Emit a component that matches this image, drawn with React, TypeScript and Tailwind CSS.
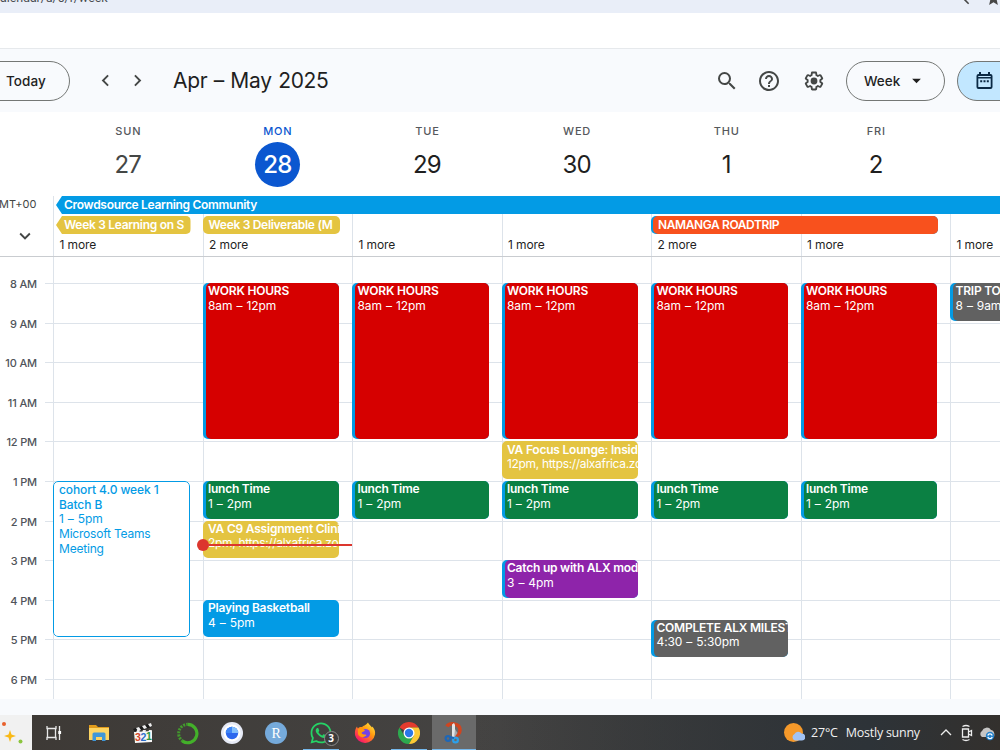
import React from "react";
import {
  MdArrowDropDown,
  MdChevronLeft,
  MdChevronRight,
  MdExpandMore,
  MdHelpOutline,
  MdSearch,
  MdStar,
} from "react-icons/md";
import { FaWhatsapp } from "react-icons/fa";

type CalendarEvent = {
  day: number;
  start: number;
  end: number;
  title: string;
  time: string;
  place?: string;
  color: string;
  edge?: boolean;
  outlined?: boolean;
};

const days = [
  { name: "SUN", date: "27" },
  { name: "MON", date: "28" },
  { name: "TUE", date: "29" },
  { name: "WED", date: "30" },
  { name: "THU", date: "1" },
  { name: "FRI", date: "2" },
];

const hours = ["8 AM", "9 AM", "10 AM", "11 AM", "12 PM", "1 PM", "2 PM", "3 PM", "4 PM", "5 PM", "6 PM"];

const weekdays = [1, 2, 3, 4, 5];

const events: CalendarEvent[] = [
  ...weekdays.map((day) => ({
    day,
    start: 8,
    end: 12,
    title: "WORK HOURS",
    time: "8am – 12pm",
    color: "bg-[#d60000]",
    edge: true,
  })),
  ...weekdays.map((day) => ({
    day,
    start: 13,
    end: 14,
    title: "lunch Time",
    time: "1 – 2pm",
    color: "bg-[#0b8043]",
    edge: true,
  })),
  { day: 0, start: 13, end: 17, title: "cohort 4.0 week 1 Batch B", time: "1 – 5pm", place: "Microsoft Teams Meeting", color: "bg-white", outlined: true },
  { day: 1, start: 14, end: 15, title: "VA C9 Assignment Clini", time: "2pm, https://alxafrica.zo", color: "bg-[#e4c441]" },
  { day: 1, start: 16, end: 17, title: "Playing Basketball", time: "4 – 5pm", color: "bg-[#039be5]" },
  { day: 3, start: 12, end: 13, title: "VA Focus Lounge: Insid", time: "12pm, https://alxafrica.zo", color: "bg-[#e4c441]" },
  { day: 3, start: 15, end: 16, title: "Catch up with ALX mod", time: "3 – 4pm", color: "bg-[#8e24aa]", edge: true },
  { day: 4, start: 16.5, end: 17.5, title: "COMPLETE ALX MILEST", time: "4:30 – 5:30pm", color: "bg-[#616161]", edge: true },
  { day: 6, start: 8, end: 9, title: "TRIP TO", time: "8 – 9am", color: "bg-[#616161]", edge: true },
];

// the grid starts with a partial 7 AM row, then one row per half hour
const rowOf = (hour: number) => (hour - 8) * 2 + 2;

const SettingsIcon = () => (
  <svg width="22" height="22" viewBox="0 0 24 24" fill="#444746">
    <path d="M13.85 22.25h-3.7c-.74 0-1.36-.54-1.45-1.27l-.27-1.89c-.27-.14-.53-.29-.79-.46l-1.8.72c-.7.26-1.47-.03-1.81-.65L2.2 15.53c-.35-.66-.2-1.44.36-1.88l1.53-1.19c-.01-.15-.02-.3-.02-.46 0-.15.01-.31.02-.46l-1.52-1.19c-.59-.45-.74-1.26-.37-1.88l1.85-3.19c.34-.62 1.11-.9 1.79-.63l1.81.73c.26-.17.52-.32.78-.46l.27-1.91c.09-.7.71-1.25 1.44-1.25h3.7c.74 0 1.36.54 1.45 1.27l.27 1.89c.27.14.53.29.79.46l1.8-.72c.71-.26 1.48.03 1.82.65l1.84 3.18c.36.66.2 1.44-.36 1.88l-1.52 1.19c.01.15.02.3.02.46s-.01.31-.02.46l1.52 1.19c.56.45.72 1.23.37 1.86l-1.86 3.22c-.34.62-1.11.9-1.8.63l-1.8-.72c-.26.17-.52.32-.78.46l-.27 1.91c-.1.68-.72 1.22-1.46 1.22zm-3.23-2h2.76l.37-2.55.53-.22c.44-.18.88-.44 1.34-.78l.45-.34 2.38.96 1.38-2.4-2.03-1.58.07-.56c.03-.26.06-.51.06-.78s-.03-.53-.06-.78l-.07-.56 2.03-1.58-1.39-2.4-2.39.96-.45-.35c-.42-.32-.87-.58-1.33-.77l-.52-.22-.37-2.55h-2.76l-.37 2.55-.53.21c-.44.19-.88.44-1.34.79l-.45.33-2.38-.95-1.39 2.39 2.03 1.58-.07.56a7 7 0 0 0-.06.79c0 .26.02.53.06.78l.07.56-2.03 1.58 1.38 2.4 2.39-.96.45.35c.43.33.86.58 1.33.77l.53.22.38 2.55z" />
    <circle cx="12" cy="12" r="3.7" />
  </svg>
);

const CalendarIcon = () => (
  <svg width="17" height="19" viewBox="0 0 17 19" fill="#0b2a45">
    <path
      fillRule="evenodd"
      d="M3 1h2v2h7V1h2v2h.5A2 2 0 0 1 16.500 5v11a2 2 0 0 1-2 2h-12a2 2 0 0 1-2-2V5a2 2 0 0 1 2-2H3zM2.300 7.500V16h12.400V7.500zM2.300 5v1h12.400V5z"
    />
    <path d="M4.200 9.300h2v2h-2zM7.500 9.300h2v2h-2zM10.800 9.300h2v2h-2z" />
  </svg>
);

const TopBar = () => (
  <>
    <div className="flex h-[13px] shrink-0 items-end justify-between overflow-hidden bg-[#e9eef8]">
      <span className="h-[23px] font-[Roboto,sans-serif] text-[12.500px] leading-4 tracking-[-0.1px] text-[#4a4d52]">
        alendar/u/0/r/week
      </span>
      <div className="-mr-[2px] flex h-[23px] items-start gap-[9px] text-[#474747]">
        <MdChevronLeft size={19} />
        <MdStar size={17} />
      </div>
    </div>
    <div className="h-9 shrink-0 border-b border-[#e6e9ec] bg-white" />
  </>
);

const Header = () => (
  <header className="flex h-[63px] shrink-0 items-center bg-[#f8fafd] text-[#1f1f1f]">
    <button className="-ml-5 flex h-10 w-[90px] shrink-0 items-center rounded-full border border-[#747775] pt-[2px] pl-[25px] text-[13.5px] font-medium tracking-[0.1px]">
      Today
    </button>
    <div className="ml-[24px] flex shrink-0 gap-[9px] text-[#444746]">
      <MdChevronLeft size={23} />
      <MdChevronRight size={23} />
    </div>
    <h1 className="ml-[24px] w-[543px] shrink-0 pt-px text-[21px] tracking-[-0.3px] [word-spacing:0.8px]">Apr – May 2025</h1>
    <div className="flex shrink-0 items-center gap-[22px] text-[#444746]">
      <MdSearch size={24} className="-ml-px" />
      <MdHelpOutline size={24} className="-ml-[4px]" />
      <SettingsIcon />
    </div>
    <button className="ml-[21px] flex h-10 w-[99px] shrink-0 items-center gap-[6px] rounded-full border border-[#747775] pl-[17px] text-[13.500px] font-medium">
      <span className="pt-[2px]">Week</span>
      <MdArrowDropDown size={21} />
    </button>
    <button className="ml-3 flex h-10 w-[90px] shrink-0 items-center rounded-full border border-[#747775] bg-[#c2e7ff] pl-[18px]">
      <CalendarIcon />
    </button>
  </header>
);

const DayNames = () => (
  <div className="ml-[53px] grid h-[84px] shrink-0 grid-cols-[repeat(7,149.6px)]">
    {days.map((day) => {
      const today = day.name === "MON";
      return (
        <div key={day.name} className="flex flex-col items-center pt-[11px]">
          <span className={`pl-px text-[11px] leading-4 font-medium tracking-[0.8px] ${today ? "text-[#0b57d0]" : "text-[#55585c]"}`}>
            {day.name}
          </span>
          <span
            className={`mt-[3px] flex size-[45px] items-center justify-center rounded-full pt-px text-[24px] tracking-[-0.8px] ${
              today ? "bg-[#0b57d0] font-medium text-white" : day.name === "SUN" ? "text-[#444746]" : "text-[#1f1f1f]"
            }`}
          >
            {day.date}
          </span>
        </div>
      );
    })}
  </div>
);

const allDayText = "overflow-hidden whitespace-nowrap text-[12px] leading-[18px] font-semibold text-white";
const arrowLeft = "[clip-path:polygon(6px_0,100%_0,100%_100%,6px_100%,0_50%)]";

const AllDay = () => (
  <div className="flex h-[61px] shrink-0 border-b border-[#c9ccd0]">
    <div className="flex w-[53px] shrink-0 flex-col text-[#444746]">
      <span className="-ml-[1px] text-[11px] leading-4">MT+00</span>
      <MdExpandMore size={22} className="mt-[13px] ml-[14px]" />
    </div>
    <div className="grid shrink-0 grid-cols-[repeat(7,149.5px)] grid-rows-[18px_18px_1fr] gap-y-[2px]">
      {[0, 1, 2, 3, 4, 5, 6].map((col) => (
        <div key={col} className="row-span-full row-start-1 border-l border-[#dde3ea]" style={{ gridColumn: col + 1 }} />
      ))}
      <div className={`col-span-full row-start-1 ml-[3px] bg-[#039be5] pl-[8px] tracking-[-0.3px] ${allDayText} ${arrowLeft}`}>
        Crowdsource Learning Community
      </div>
      <div className={`col-start-1 row-start-2 mr-[12px] ml-[3px] rounded-r-[5px] bg-[#e4c441] pl-[8px] tracking-[-0.3px] ${allDayText} ${arrowLeft}`}>
        Week 3 Learning on S
      </div>
      <div className={`col-start-2 row-start-2 mr-[12px] rounded-[5px] bg-[#e4c441] pl-[6px] tracking-[-0.3px] ${allDayText}`}>
        Week 3 Deliverable (M
      </div>
      <div className="col-span-2 col-start-5 row-start-2 mr-[12px] flex overflow-hidden rounded-[5px] bg-[#039be5] pl-[2px]">
        <div className={`flex-1 rounded-l-[5px] bg-[#f8511d] pl-[5px] tracking-[-0.4px] ${allDayText}`}>NAMANGA ROADTRIP</div>
      </div>
      {[1, 2, 1, 1, 2, 1, 1].map((count, col) => (
        <span
          key={col}
          className="row-start-3 pl-[6.500px] text-[12px] leading-[17px] tracking-[-0.1px] text-[#1f1f1f]"
          style={{ gridColumn: col + 1 }}
        >
          {count} more
        </span>
      ))}
    </div>
  </div>
);

const EventCard = ({ event }: { event: CalendarEvent }) => (
  <div
    className={`mr-[13px] mb-[2px] flex overflow-hidden rounded-[5px] text-[12px] leading-[14.7px] ${
      event.edge ? "bg-[#039be5] pl-[3px]" : ""
    }`}
    style={{ gridColumn: event.day + 1, gridRow: `${rowOf(event.start)} / ${rowOf(event.end)}` }}
  >
    <div
      className={`min-w-0 flex-1 overflow-hidden ${event.color} ${
        event.outlined
          ? "rounded-[5px] border border-[#039be5] pt-px pl-[5px] text-[#039be5]"
          : event.edge
            ? "rounded-l-[5px] pt-[1.2px] pl-[2.500px] whitespace-nowrap text-white"
            : "pt-[1.2px] pl-[5.500px] whitespace-nowrap text-white"
      }`}
    >
      <p className={event.outlined ? "w-[110px] font-medium tracking-[-0.1px]" : "font-semibold tracking-[-0.22px]"}>{event.title}</p>
      <p className={event.time.includes("https") ? "tracking-[-0.32px]" : "[word-spacing:0.8px] tracking-[-0.1px]"}>{event.time}</p>
      {event.place && <p className="w-[110px] tracking-[-0.2px]">{event.place}</p>}
    </div>
  </div>
);

const WeekGrid = () => (
  <div className="flex h-[442px] shrink-0 overflow-hidden">
    <div className="flex w-[45px] shrink-0 flex-col pt-[7px] pr-[8px] text-right text-[11px] font-medium tracking-[-0.15px] text-[#50545a]">
      {hours.map((hour) => (
        <span key={hour} className="h-[39.6px] shrink-0 leading-[40px]">
          {hour}
        </span>
      ))}
    </div>
    <div className="grid shrink-0 grid-cols-[8px_repeat(7,149.5px)] grid-rows-[26px_repeat(21,19.8px)]">
      {hours.map((hour, i) => (
        <div key={hour} className="col-span-full border-t border-[#dde3ea]" style={{ gridRow: `${i * 2 + 2} / span 2` }} />
      ))}
      <div className="col-start-2 col-end-9 row-span-full row-start-1 grid grid-cols-subgrid grid-rows-subgrid">
        {[0, 1, 2, 3, 4, 5, 6].map((col) => (
          <div key={col} className="row-span-full row-start-1 border-l border-[#dde3ea]" style={{ gridColumn: col + 1 }} />
        ))}
        {events.map((event, i) => (
          <EventCard key={i} event={event} />
        ))}
        {/* current time marker */}
        <div className="z-10 col-start-2 row-start-[15] mt-[-1px] -ml-[6px] flex h-3 items-center">
          <span className="size-3 rounded-full bg-[#dc362e]" />
          <span className="h-[2px] flex-1 bg-[#dc362e]" />
        </div>
      </div>
    </div>
  </div>
);

const taskIcons = [
  <svg key="tasks" width="18" height="18" viewBox="0 0 18 18" fill="none" stroke="#e8e8e8" strokeWidth="1.300">
    <path d="M2 2v2.500h9V2M2 16v-2.500h9V16M2.500 4.500h8v9h-8zM14.500 2v14" />
    <path d="M13.300 7h2.800v3h-2.800z" fill="#fff" stroke="none" />
  </svg>,
  <svg key="files" width="22" height="20" viewBox="0 0 22 20">
    <path d="M1 2h7l2 2h11v3H1z" fill="#e09b1b" />
    <path d="M1 5h20v12H1z" fill="#fcd462" />
    <path d="M4.500 18v-7a1.500 1.500 0 0 1 1.500-1.500h10a1.500 1.500 0 0 1 1.500 1.500v7h-3.500v-4H8v4z" fill="#3f97d8" />
  </svg>,
  <svg key="player" width="22" height="22" viewBox="0 0 22 22">
    <path d="M1 7 19 1l1 4L3 10z" fill="#1b1b1b" />
    <path d="m4 6 3-1 2 3-3 1zM10 4l3-1 2 3-3 1zM16 2l3-1 1 3-2 1zM5 8h3l-1 3H4zM11 8h3l-1 3h-3zM17 8h3l-1 3h-3z" fill="#eee" />
    <path d="m2 10 18-1v11l-17 1z" fill="#f7f7f7" />
    <g fontFamily="Liberation Sans, sans-serif" fontWeight="700" fontSize="10.500">
      <text x="3" y="19" fill="#d4472b">3</text>
      <text x="8.500" y="18.700" fill="#2d6ec9">2</text>
      <text x="14" y="18.400" fill="#2a9541">1</text>
    </g>
  </svg>,
  <svg key="ring" width="23" height="23" viewBox="0 0 23 23" fill="none" stroke="#43b02a">
    <path d="M11.500 2.300a9.200 9.200 0 1 1-5 16.800" strokeWidth="3.200" />
    <path d="M7 19.300A9.200 9.200 0 0 1 11.500 2.300" strokeWidth="3" strokeDasharray="2 1.100" opacity=".8" />
  </svg>,
  <svg key="pie" width="22" height="22" viewBox="0 0 22 22">
    <circle cx="11" cy="11" r="11" fill="#e6eaf6" />
    <circle cx="11" cy="11" r="8.500" fill="#fff" />
    <circle cx="11" cy="11" r="6.200" fill="#2c67ee" />
    <path d="M11 11V4.800A6.200 6.200 0 0 0 4.800 11z" fill="#3f86f6" />
    <path d="M11 11V4.800a6.200 6.200 0 0 1 6.200 6.200z" fill="#83bffc" />
  </svg>,
  <span key="r" className="flex size-[22px] items-center justify-center rounded-full bg-[#75aadb] font-['Liberation_Serif',serif] text-[14px] text-white">
    R
  </span>,
  <span key="wa" className="relative flex size-[24px] items-center justify-center text-[#25d366]">
    <FaWhatsapp size={24} />
    <span className="absolute top-[10px] left-[15px] flex size-[15px] items-center justify-center rounded-full border border-[#8b8b8b] bg-[#3c3c3c] font-['Open_Sans',sans-serif] text-[10px] font-bold text-white">
      3
    </span>
  </span>,
  <svg key="ff" width="22" height="22" viewBox="0 0 22 22">
    <defs>
      <linearGradient id="fox" x1="1" y1="0" x2="0.200" y2="1">
        <stop offset="0" stopColor="#fff44f" />
        <stop offset=".45" stopColor="#ff980e" />
        <stop offset=".8" stopColor="#ff3750" />
        <stop offset="1" stopColor="#eb0878" />
      </linearGradient>
    </defs>
    <path d="M3 4.500c.2 1 .5 1.500 1 2C5 5 6.500 4.800 8 5c1-.5 1.500-1.500 2.500-1.500C11 3 13 2 14 .5c.5 2 3 3 4 5l.5-1c2 2.500 3 5 2.500 8A10.200 10.200 0 0 1 1 13C.5 9 1.500 6.500 3 4.500z" fill="url(#fox)" />
    <circle cx="11.500" cy="11.500" r="4.600" fill="#7542e5" />
    <path d="M4 7c3-2 6 0 7 1.500-1 1.500-3 1-3.500 2.500 1 2 4 1 5 2-2 3-7 3-8.500-1z" fill="#ff980e" />
  </svg>,
  <svg key="chrome" width="22" height="22" viewBox="0 0 22 22">
    <path d="M11 11 1.470 5.500A11 11 0 0 1 20.530 5.500H11z" fill="#e33b2e" />
    <path d="M1.470 5.500A11 11 0 0 0 11 22l4.760-8.250H6.240z" fill="#2da94f" />
    <path d="M11 5.500h9.530A11 11 0 0 1 11 22l4.760-8.250z" fill="#fcc934" />
    <circle cx="11" cy="11" r="5.500" fill="#fff" />
    <circle cx="11" cy="11" r="4.200" fill="#2a78e8" />
  </svg>,
  <svg key="snip" width="20" height="24" viewBox="0 0 20 24">
    <path d="M3 5.500C5 1.500 16 1.500 16 9c0 4-3 6-6 6" fill="none" stroke="#cf4520" strokeWidth="3.600" />
    <path d="M8 3.500 10 2l1 2v13H8z" fill="#e3e6e8" />
    <path d="m11 8 2.500 4-3.500 5z" fill="#a5abb0" />
    <circle cx="4" cy="17.500" r="2.400" fill="none" stroke="#1d67b8" strokeWidth="2.200" />
    <circle cx="11.500" cy="19" r="2.400" fill="none" stroke="#2ca0ea" strokeWidth="2.200" />
    <path d="m6 16 4 1" stroke="#1d67b8" strokeWidth="2" />
  </svg>,
];

const Taskbar = () => (
  <footer className="flex h-[35px] shrink-0 items-center bg-gradient-to-r from-[#3d3935] via-[#454443] to-[#353331] text-[#f1f1f1]">
    <div className="h-full w-8 bg-[#f1f1f1]">
      <svg width="32" height="35" viewBox="0 0 32 35">
        <circle cx="4" cy="9" r="2" fill="#e8602c" />
        <path d="m10 15 1.500 4.500L16 21l-4.500 1.500L10 27l-1.500-4.500L4 21l4.500-1.500z" fill="#f9b916" />
        <circle cx="20.500" cy="26.500" r="2" fill="#8bc53f" />
      </svg>
    </div>
    {taskIcons.map((icon, i) => (
      <div
        key={i}
        className={`flex h-full w-[44.4px] flex-col items-center ${i === 9 ? "bg-[#6a6a6a]" : ""}`}
      >
        <div className="flex flex-1 items-center pt-[2px]">{icon}</div>
        <div className={`h-px ${i === 9 ? "w-full bg-[#76b9ed]" : i === 6 || i === 8 ? "w-9 bg-[#76b9ed]" : ""}`} />
      </div>
    ))}
    <div className="flex h-full flex-1 items-center bg-gradient-to-r from-transparent via-[#2d3338] via-75% to-[#33302d] font-['Open_Sans',sans-serif]">
      <svg width="21" height="20" viewBox="0 0 21 20" className="mt-[1px] ml-[308px] shrink-0">
        <circle cx="9.500" cy="9.500" r="9.500" fill="#f5992a" />
        <path d="M11 17.500a3.500 3.500 0 0 1-.5-6.500 4 4 0 0 1 7-.5 3.500 3.500 0 0 1 .5 7z" fill="#a2c3f4" />
      </svg>
      <span className="ml-[6px] shrink-0 pt-px text-[12.500px] tracking-[-0.15px]">27°C</span>
      <span className="ml-[8px] shrink-0 pt-px text-[12.500px] tracking-[-0.25px]">Mostly sunny</span>
      <svg width="60" height="20" viewBox="0 0 60 20" fill="none" stroke="#ededed" strokeWidth="1.300" className="mt-[1px] ml-[20px] shrink-0">
        <path d="m1 12 5-5 5 5" />
        <g transform="translate(-2 0)">
          <path d="M24.500 6h6v8h-6zM30.500 9l3-1.500v5l-3-1.500M24.500 3.500q3.500-2 7 0M24.500 16.500q3.500 2 7 0" />
          <path d="M44 14a3.500 3.500 0 0 1 0-6 5 5 0 0 1 9-1c3 0 4 4 3 7z" fill="#c5c5c5" stroke="none" />
          <circle cx="52" cy="13" r="4.200" fill="#2382cd" stroke="none" />
          <path d="M49.800 12.500a2.300 2.300 0 0 1 4.400 0M54.200 14a2.300 2.300 0 0 1-4.400 0" stroke="#fff" />
        </g>
      </svg>
    </div>
  </footer>
);

const App = () => {
  return (
    <div className="flex h-[750px] w-[1000px] flex-col overflow-hidden bg-white font-[Inter,sans-serif]">
      <TopBar />
      <Header />
      <DayNames />
      <AllDay />
      <WeekGrid />
      <div className="h-4 shrink-0 bg-[#f8fafd]" />
      <Taskbar />
    </div>
  );
};

export default App;
